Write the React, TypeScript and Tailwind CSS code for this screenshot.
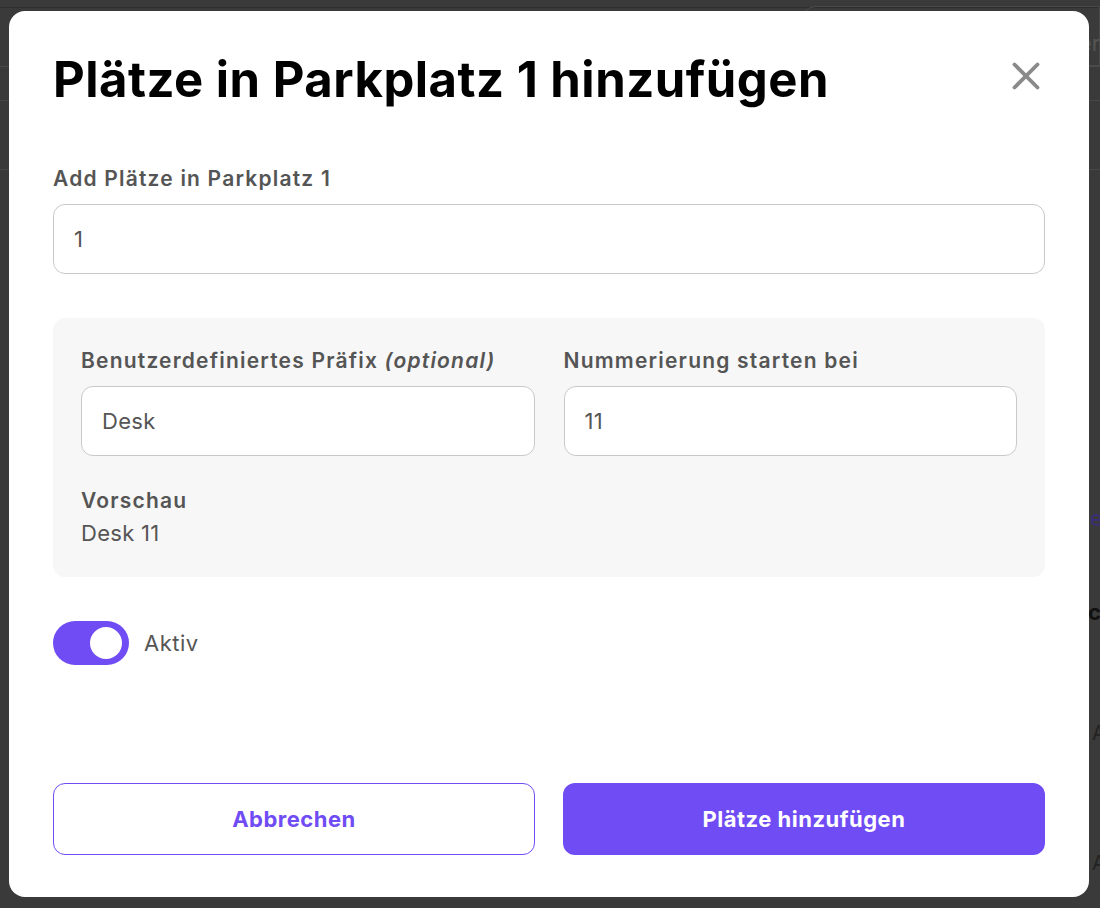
import { X } from 'lucide-react';

function Field({ label, value, optional }: { label: string; value: string; optional?: boolean }) {
  return (
    <div className="flex flex-col">
      <label className="text-[21px] font-semibold text-[#555555] leading-6 mb-[13px] tracking-[1.2px]">
        {label}
        {optional && <span className="italic"> (optional)</span>}
      </label>
      <div className="h-[70px] rounded-xl border border-[#c9c9c9] bg-white flex items-center px-5 text-[22px] tracking-[0.3px] text-[#555555]">
        {value}
      </div>
    </div>
  );
}

export default function App() {
  return (
    <div className="relative w-[1100px] h-[908px] overflow-hidden bg-[#3a3a3a]" style={{ fontFamily: 'Inter, Lato, sans-serif' }}>
      {/* page behind the overlay */}
      <div className="absolute inset-0 pointer-events-none">
        <div className="h-[8px] border-b border-[#2e2e2e]" />
        <div className="ml-[800px] mt-[-2px] h-[60px] w-[300px] rounded-tl-2xl border border-[#4a4a4a]" />
        <div className="border-t border-[#4a4a4a]" />
        <div className="flex justify-end -mt-[40px] text-[22px] text-[#555]">er</div>
        <div className="mt-[40px] border-t border-[#474747]" />
        <div className="mt-[68px] border-t border-[#474747]" />
        <div className="absolute left-[1090px] top-[502px] text-[22px] text-[#3b2f7a]">e</div>
        <div className="absolute left-[1088px] top-[596px] text-[22px] font-bold text-[#111]">ca</div>
        <div className="absolute left-[1092px] top-[718px] text-[20px] text-[#222]">A</div>
        <div className="absolute left-[1092px] top-[848px] text-[20px] text-[#222]">A</div>
      </div>

      {/* dialog */}
      <div className="relative ml-[9px] mt-[11px] w-[1080px] h-[886px] rounded-2xl bg-white px-[44px] pt-[45px] flex flex-col">
        <div className="flex items-start justify-between">
          <h1 className="text-[49px] font-bold leading-[48px] text-black tracking-[0.5px]">Plätze in Parkplatz 1 hinzufügen</h1>
          <button className="mt-[-3px] mr-[-4px] text-[#8a8a8a]" aria-label="Close">
            <X size={46} strokeWidth={2} />
          </button>
        </div>

        <div className="mt-[63px]">
          <Field label="Add Plätze in Parkplatz 1" value="1" />
        </div>

        <div className="mt-[44px] rounded-xl bg-[#f7f7f7] px-[28px] pt-[31px] pb-[32px]">
          <div className="grid grid-cols-2 gap-[29px]">
            <Field label="Benutzerdefiniertes Präfix" value="Desk" optional />
            <Field label="Nummerierung starten bei" value="11" />
          </div>
          <div className="mt-[33px] text-[21px] font-semibold tracking-[1.2px] text-[#555555] leading-6">Vorschau</div>
          <div className="mt-[8px] text-[22px] tracking-[0.3px] text-[#555555] leading-6">Desk 11</div>
        </div>

        <div className="mt-[44px] flex items-center gap-[15px]">
          <div className="w-[76px] h-[44px] rounded-full bg-[#704cf5] flex items-center justify-end pr-[7px]">
            <div className="w-[32px] h-[32px] rounded-full bg-white" />
          </div>
          <span className="text-[22px] tracking-[0.5px] text-[#555555]">Aktiv</span>
        </div>

        <div className="mt-auto mb-[42px] grid grid-cols-2 gap-[28px]">
          <button className="h-[72px] rounded-xl border border-[#704cf5] bg-white text-[22px] font-bold tracking-[0.5px] text-[#704cf5]">
            Abbrechen
          </button>
          <button className="h-[72px] rounded-xl bg-[#704cf5] text-[22px] font-bold tracking-[0.5px] text-white">
            Plätze hinzufügen
          </button>
        </div>
      </div>
    </div>
  );
}
